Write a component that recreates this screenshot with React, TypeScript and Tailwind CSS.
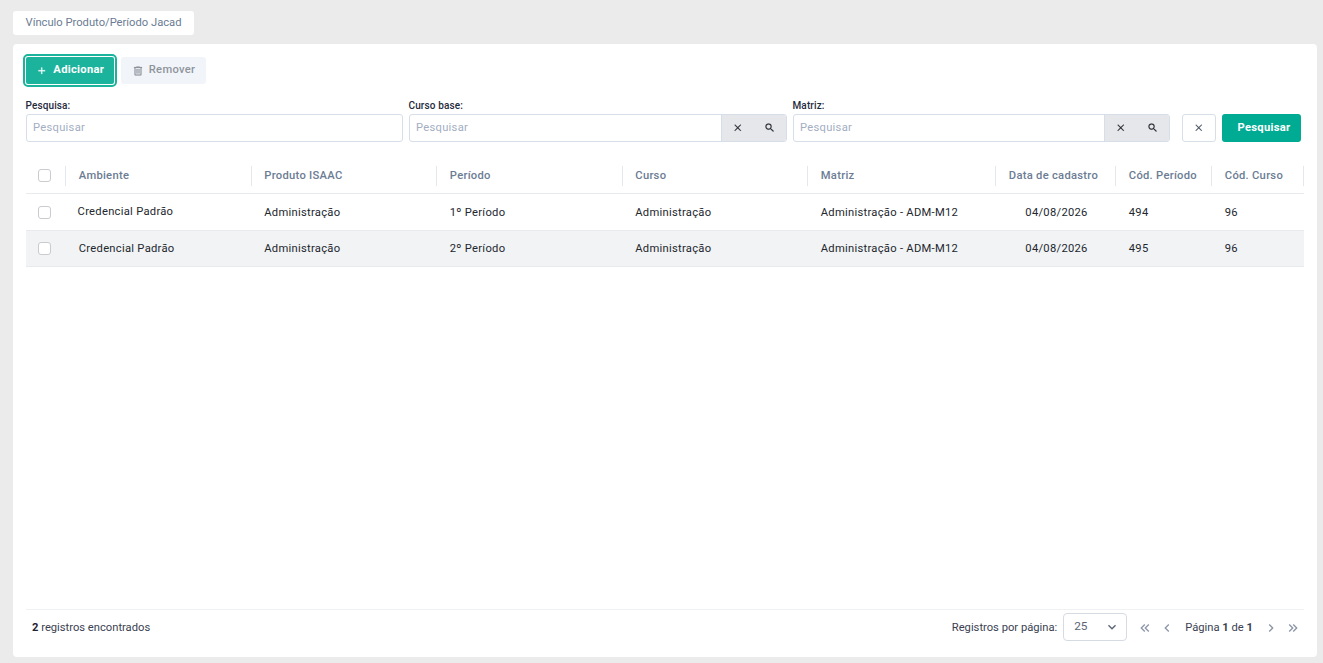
import { ReactNode } from 'react';
import clsx from 'clsx';

// ícones no padrão Material Design (viewBox 24x24)
const icons = {
  plus: 'M19 13h-6v6h-2v-6H5v-2h6V5h2v6h6v2z',
  close: 'M19 6.41L17.59 5 12 10.59 6.41 5 5 6.41 10.59 12 5 17.59 6.41 19 12 13.41 17.59 19 19 17.59 13.41 12z',
  search:
    'M9.5 3A6.5 6.5 0 0 1 16 9.5c0 1.61-.59 3.09-1.56 4.23l.27.27h.79l5 5-1.5 1.5-5-5v-.79l-.27-.27A6.52 6.52 0 0 1 9.5 16a6.5 6.5 0 0 1 0-13m0 2C7 5 5 7 5 9.5S7 14 9.5 14 14 12 14 9.5 12 5 9.5 5z',
  trash: 'M9 3v1H4v2h1v13a2 2 0 0 0 2 2h10a2 2 0 0 0 2-2V6h1V4h-5V3H9M7 6h10v13H7V6m2 2v9h2V8H9m4 0v9h2V8h-2z',
  down: 'M7.41 8.58L12 13.17l4.59-4.59L18 10l-6 6-6-6 1.41-1.42z',
  left: 'M15.41 16.58L10.83 12l4.58-4.59L14 6l-6 6 6 6 1.41-1.42z',
  right: 'M8.59 16.58L13.17 12 8.59 7.41 10 6l6 6-6 6-1.41-1.42z',
  first: 'M18.41 7.41L17 6l-6 6 6 6 1.41-1.41L13.83 12l4.58-4.59m-6 0L11 6l-6 6 6 6 1.41-1.41L7.83 12l4.58-4.59z',
  last: 'M5.59 7.41L7 6l6 6-6 6-1.41-1.41L10.17 12 5.59 7.41m6 0L13 6l6 6-6 6-1.41-1.41L16.17 12l-4.58-4.59z',
};

function Icon({ name, className }: { name: keyof typeof icons; className?: string }) {
  return (
    <svg viewBox="0 0 24 24" fill="currentColor" className={clsx('shrink-0', className)}>
      <path d={icons[name]} />
    </svg>
  );
}

const columns = [
  { title: 'Ambiente', width: 'w-[185.5px]' },
  { title: 'Produto ISAAC', width: 'w-[185.5px]' },
  { title: 'Período', width: 'w-[185.5px]' },
  { title: 'Curso', width: 'w-[185.5px]' },
  { title: 'Matriz', width: 'w-[188px]' },
  { title: 'Data de cadastro', width: 'w-[120px]', center: true },
  { title: 'Cód. Período', width: 'w-[96px]' },
  { title: 'Cód. Curso', width: 'w-[93px]' },
];

const rows = [
  ['Credencial Padrão', 'Administração', '1º Período', 'Administração', 'Administração - ADM-M12', '04/08/2026', '494', '96'],
  ['Credencial Padrão', 'Administração', '2º Período', 'Administração', 'Administração - ADM-M12', '04/08/2026', '495', '96'],
];

function Field({ label, className, children }: { label: string; className: string; children?: ReactNode }) {
  return (
    <div className={className}>
      <label className="block h-[14px] text-[10px] leading-[15px] font-medium tracking-[0.12px] text-[#1f2a3d]">{label}</label>
      <div className="mt-0.5 flex h-7 overflow-hidden rounded-[3px] border border-[#d6dfe8] bg-white">
        <input
          placeholder="Pesquisar"
          className="min-w-0 flex-1 pt-px pr-1.5 pl-[6.5px] text-[11.2px] tracking-[0.28px] outline-none placeholder:text-[#a3aec2]"
        />
        {children}
      </div>
    </div>
  );
}

function LookupButtons() {
  return (
    <div className="flex w-[65px] items-center justify-around border-l border-[#d6dfe8] bg-[#e5e7eb] text-[#2b2f36]">
      <button><Icon name="close" className="size-[11.5px] stroke-current stroke-[0.3]" /></button>
      <button><Icon name="search" className="size-[11.5px] stroke-current stroke-[0.4]" /></button>
    </div>
  );
}

function Checkbox() {
  return (
    <div className="flex w-[39px] shrink-0 pl-3">
      <input type="checkbox" className="size-[13px] appearance-none rounded-[3px] border border-[#c9cbcf] bg-white" />
    </div>
  );
}

export default function App() {
  return (
    <div className="flex h-[663px] w-[1323px] flex-col items-start bg-[#ebebeb] pt-[11px] pr-[6px] pl-[13px] font-['Roboto',sans-serif] text-[11.2px]">
      {/* título da aba */}
      <div className="flex h-6 w-[181px] items-center justify-center rounded-[3px] bg-white text-[#6b7c93]">
        Vínculo Produto/Período Jacad
      </div>

      <main className="mt-[9px] flex h-[613px] w-full flex-col rounded bg-white px-[13px] pt-[13px]">
        {/* ações */}
        <div className="flex gap-[7px] tracking-[0.28px]">
          <button className="flex h-[27px] w-[88px] items-center justify-center gap-1.5 rounded-[2px] bg-[#1bb39c] font-bold text-white outline-2 outline-offset-1 outline-[#1bb39c]">
            <Icon name="plus" className="size-[11.5px] stroke-current stroke-[0.5]" />
            Adicionar
          </button>
          <button className="flex h-[27px] w-[85px] items-center justify-center gap-[5px] rounded-[3px] bg-[#f1f4f9] font-medium text-[#8f949c]">
            <Icon name="trash" className="size-3 stroke-current stroke-[0.4]" />
            Remover
          </button>
        </div>

        {/* filtros */}
        <div className="mt-[14px] flex items-end">
          <Field label="Pesquisa:" className="-ml-[0.5px] w-[377px]" />
          <Field label="Curso base:" className="ml-1.5 w-[378px]">
            <LookupButtons />
          </Field>
          <Field label="Matriz:" className="ml-1.5 w-[377px]">
            <LookupButtons />
          </Field>
          <button className="ml-[12.5px] flex h-7 w-[34px] items-center justify-center rounded-[3px] border border-[#d6dfe8] text-[#4b5563]">
            <Icon name="close" className="size-[11.5px] stroke-current stroke-[0.2]" />
          </button>
          <button className="ml-1.5 h-7 w-[79px] rounded-[3px] bg-[#00ab93] pl-[5px] font-bold tracking-[0.28px] text-white">
            Pesquisar
          </button>
        </div>

        {/* tabela */}
        <div className="mt-4 w-[1278px] tracking-[0.28px]">
          <div className="flex h-9 items-center border-b border-[#e8eaed] font-medium text-[#6b7c93]">
            <Checkbox />
            {columns.map((col, i) => (
              <div
                key={i}
                className={clsx(
                  'flex h-5 shrink-0 items-center border-l border-[#e3e7ee] pl-[12.8px] leading-5',
                  col.width,
                  i === columns.length - 1 && 'border-r'
                )}
              >
                {col.title}
              </div>
            ))}
          </div>
          {rows.map((row, r) => (
            <div key={r} className={clsx('flex items-center border-b border-[#e8eaed] text-[#23272e]', r % 2 ? 'h-9 bg-[#f1f3f5]' : 'h-[37px]')}>
              <Checkbox />
              {row.map((cell, i) => (
                <div
                  key={i}
                  className={clsx(
                    'shrink-0',
                    columns[i].width,
                    columns[i].center ? 'pl-[3px] text-center' : r === 0 && i === 0 ? 'pl-[12.6px]' : 'pl-[13.8px]',
                    r === 1 ? 'pt-px' : i > 0 && 'pt-0.5'
                  )}
                >
                  {cell}
                </div>
              ))}
            </div>
          ))}
        </div>

        {/* paginação */}
        <footer className="mt-auto mb-3 flex h-9 w-[1278px] items-center border-t border-[#f0f1f3] pr-[3px] pl-1.5 text-[#3b4252]">
          <span className="pt-px"><b className="text-[#1f2430]">2</b> registros encontrados</span>
          <span className="ml-auto pt-px">Registros por página:</span>
          <div className="mb-px ml-1.5 flex h-7 w-16 items-center justify-between rounded border border-[#d6dae3] pr-1.5 pl-2.5 text-[11.8px] text-[#5b6475]">
            <span className="pb-px">25</span>
            <Icon name="down" className="size-4" />
          </div>
          <Icon name="first" className="ml-[10px] size-4 text-[#8c96a8]" />
          <Icon name="left" className="ml-1.5 size-4 text-[#8c96a8]" />
          <span className="ml-[10px] pt-px">Página <b>1</b> de <b>1</b></span>
          <Icon name="right" className="ml-[10px] size-4 text-[#8c96a8]" />
          <Icon name="last" className="ml-1.5 size-4 text-[#8c96a8]" />
        </footer>
      </main>
    </div>
  );
}
